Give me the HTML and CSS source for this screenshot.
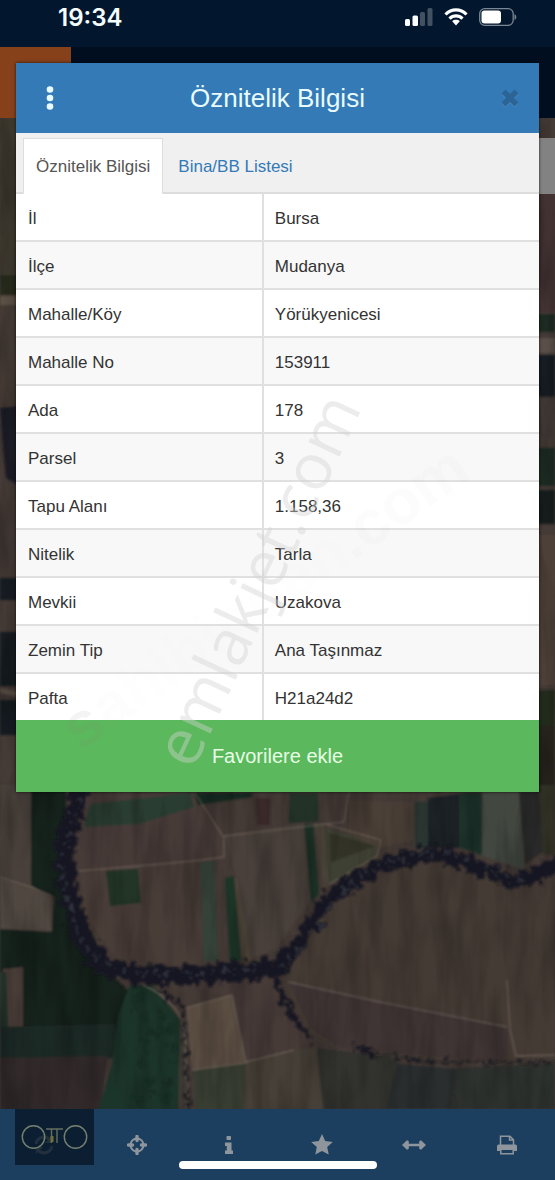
FILE: index.html
```html
<!DOCTYPE html>
<html lang="tr">
<head>
    <meta charset="UTF-8">
    <meta name="viewport" content="width=device-width, initial-scale=1.0">
    <title>Öznitelik Bilgisi</title>
    <link rel="stylesheet" href="styles.css">
</head>
<body>
    <div class="app">
        <div class="status-bar">
            <span class="time">19:34</span>
            <div class="status-icons">
                <svg width="28" height="18" viewBox="0 0 28 18" fill="#fff">
                    <rect x="0" y="11" width="5" height="7" rx="1.5"/>
                    <rect x="7.500" y="7.500" width="5.500" height="10.500" rx="1.5"/>
                    <rect x="15" y="4" width="5" height="14" rx="1.5" opacity=".25"/>
                    <rect x="22.500" y="0" width="5" height="18" rx="1.5" opacity=".25"/>
                </svg>
                <svg width="24" height="18" viewBox="0 0 24 18">
                    <g fill="none" stroke="#fff" stroke-width="3.200">
                        <path d="M1.500 6.500C7.500 .400 16.500 .400 22.500 6.500"/>
                        <path d="M5.500 10.700C9.200 7 14.800 7 18.500 10.700"/>
                    </g>
                    <path d="M8.200 13.200C10.200 11.300 13.800 11.300 15.800 13.200L12 17.500Z" fill="#fff"/>
                </svg>
                <svg width="38" height="18" viewBox="0 0 38 18">
                    <rect x=".700" y=".700" width="33.500" height="16.600" rx="5" fill="none" stroke="#7b8794" stroke-width="1.300"/>
                    <rect x="2.500" y="2.500" width="19.500" height="13" rx="3" fill="#fff"/>
                    <path d="M35.500 6.200c2.400.800 2.400 4.800 0 5.600z" fill="#7b8794"/>
                </svg>
            </div>
        </div>

        <main class="main">
            <svg class="map" viewBox="0 47 555 1062" preserveAspectRatio="xMidYMax slice" aria-hidden="true">
                <defs>
                    <filter id="trees" x="-10%" y="-10%" width="120%" height="120%">
                        <feTurbulence type="fractalNoise" baseFrequency=".13" numOctaves="2" seed="4" result="n"/>
                        <feDisplacementMap in="SourceGraphic" in2="n" scale="20" xChannelSelector="R" yChannelSelector="G"/>
                        <feGaussianBlur stdDeviation="1"/>
                    </filter>
                    <filter id="soft">
                        <feGaussianBlur stdDeviation=".8"/>
                    </filter>
                    <filter id="grain" x="0" y="0" width="100%" height="100%">
                        <feTurbulence type="fractalNoise" baseFrequency=".06 .012" numOctaves="3" seed="9"/>
                        <feColorMatrix values="0 0 0 0 0  0 0 0 0 0  0 0 0 0 0  0 1.600 0 0 -.600"/>
                    </filter>
                </defs>
                <rect y="47" width="555" height="1062" fill="#443a36"/>
                <g filter="url(#soft)">
                    <!-- left edge -->
                    <path fill="#3d372f" d="M0 118h20v162H0z"/>
                    <path fill="#26291f" d="M0 275h20v20H0z"/>
                    <path fill="#5c5145" d="M0 296h20v9H0z"/>
                    <path fill="#453b36" d="M0 305h20v100H0z"/>
                    <path fill="#1a1c28" d="M0 408l20-2v80L6 478z"/>
                    <path fill="#171b21" d="M0 578h20v22H0zM0 632h20v54H0zM0 700h20v35H0z"/>
                    <path fill="#5e5249" d="M0 688l20 4v5L0 693z"/>
                    <!-- right edge -->
                    <path fill="#423331" d="M535 194h20v118h-20z"/>
                    <path fill="#1d2b20" d="M535 314h20v18h-20z"/>
                    <path fill="#5a5048" d="M535 338h20v15h-20z"/>
                    <path fill="#141c20" d="M535 355h20v42h-20z"/>
                    <path fill="#403934" d="M535 397h20v40h-20z"/>
                    <path fill="#1f2c23" d="M535 448h20v38h-20z"/>
                    <path fill="#171b1b" d="M535 490h20v34h-20z"/>
                    <path fill="#4d4038" d="M535 535h20v150h-20z"/>
                    <path fill="#20291f" d="M535 690h20v36h-20z"/>
                    <path fill="#26221f" d="M535 726h20v66h-20z"/>
                    <!-- west bank -->
                    <path fill="#4a413b" d="M0 785h31v100L0 878z"/>
                    <path fill="#15211f" d="M31 785h35v118l-16-8-19-8z"/>
                    <path fill="#504741" d="M0 878l32 8 18 12 2 33-52-2z"/>
                    <path fill="#17211f" d="M0 929l52 3 2-34 22 2 30 70 24 22-14 52H0z"/>
                    <path fill="#483d37" d="M3 969l20-2v60H8z"/>
                    <path fill="#20302a" d="M0 972l6 0 2 56H0z"/>
                    <path fill="#1f2a26" d="M0 1027l115-3 4 34H0z"/>
                    <path fill="#322b2b" d="M0 1058l108-2-8 55H0z"/>
                    <path fill="#1c3529" d="M130 985l22 0 28 35 6 40-6 50H98l14-45 6-50z"/>
                    <path fill="#3f3a35" d="M180 1020l7 0 3 90h-12z"/>
                    <!-- fields between the river arms -->
                    <path fill="#473b37" d="M80 792l115 5 29 38v26L78 870z"/>
                    <path fill="#2a3d32" d="M90 804l100-11 4 14-55 17-55 3z"/>
                    <path fill="#172c20" d="M194 793h58v4l-54 8z"/>
                    <path fill="#483d39" d="M80 872l122-12v105l-78 3-40-54z"/>
                    <path fill="#203627" d="M106 871l32-2 3 34-31 3z"/>
                    <path fill="#344238" d="M200 862l14-1 4 100h-14z"/>
                    <path fill="#1f3527" d="M225 878l9-2 7 85-11 2z"/>
                    <path fill="#50463a" d="M235 878l6 0 10 82-8 1z"/>
                    <path fill="#4a3f3b" d="M226 836l79-14 5 80-35 48-23 8-16-82z"/>
                    <path fill="#3b2c2b" d="M255 798h15v27h-13z"/>
                    <path fill="#233127" d="M290 793h28v29l-29 1z"/>
                    <path fill="#1f3328" d="M304 824h9l6 70-8 9z"/>
                    <path fill="#4c443b" d="M315 823h9l5 60-5 8z"/>
                    <path fill="#3c3f33" d="M325 828l54 14-4 16-45 26z"/>
                    <path fill="#303027" d="M329 833l46 13-44 16z"/>
                    <path fill="#4b3f38" d="M349 800l64 2v38l-32 8-32-13z"/>
                    <path fill="#2c3630" d="M415 802h13v46h-13z"/>
                    <path fill="#1e2426" d="M428 798l31-4v54h-31z"/>
                    <path fill="#1b332b" d="M459 793h23v62l-23-8z"/>
                    <path fill="#42463f" d="M483 792h36l6 78-43-14z"/>
                    <path fill="#2b2b29" d="M519 792h20l4 60-18 12z"/>
                    <path fill="#333028" d="M539 785h16v70l-12-1z"/>
                    <!-- big fields on the south bank -->
                    <path fill="#443a36" d="M280 966l55-60 66-42 50-2 50 22 54 4v168l-75 6-168-19-30-30z"/>
                    <path fill="#403535" d="M288 982l220 45-2 35-165-14-30-20z"/>
                    <path fill="#463b39" d="M178 982l98-6 38 66-70 28-14-72z"/>
                    <path fill="#5a4e42" d="M186 1008l46-13 14 68-54 7z"/>
                    <path fill="#393d33" d="M193 1070l54-7-3 46h-49z"/>
                    <path fill="#463f39" d="M246 1062l48-13 23-1 8 61h-80z"/>
                    <path fill="#30332e" d="M317 1048l80 10-8 51h-66z"/>
                    <path fill="#292e2f" d="M397 1064l60 5-5 40h-65z"/>
                    <path fill="#2f302e" d="M457 1068l98-5v46H453z"/>
                </g>
                <g fill="none" stroke="#7a6e63" stroke-width="1.300" opacity=".65" filter="url(#soft)">
                    <path d="M78 871l72-6 52-5 22-3v-19l-29-45M224 836l120-14 5-30M0 877l34 11 18 8"/>
                    <path d="M288 982l92 20 127 25M507 980l3 50 6 26 39-1M186 1008l46-13 14 68-54 7M246 1062l48-12"/>
                    <path d="M143 985c22 9 40 28 42 46l2 78" stroke-width="2"/>
                    <path d="M325 824l56 16-4 16-48 28"/>
                </g>
                <rect y="47" width="555" height="1062" filter="url(#grain)" opacity=".28"/>
                <g fill="none" stroke="#171820" filter="url(#trees)">
                    <path stroke-width="19" d="M80 788c-8 35-22 60-11 100 9 36 10 60 38 78 36 16 95 8 165 3"/>
                    <path stroke-width="15" d="M268 973c20-9 38-40 52-62 18-27 50-45 100-56 36-7 55 18 95 26 20 1 30-16 50-19"/>
                    <path stroke-width="5" d="M276 980l16 34 20 26M350 1048l23 4"/>
                    <path stroke-width="4" d="M160 990l24 18"/>
                </g>
                <g fill="none" stroke="#1d1f20" filter="url(#trees)">
                    <path stroke-width="3" d="M375 1054l50 8 130 1M184 1008l5 101"/>
                </g>
                <g fill="none" stroke="#2f313b" filter="url(#trees)" stroke-dasharray="4 7">
                    <path stroke-width="5" d="M78 800c-8 35-24 60-11 92 9 36 12 56 40 73 36 14 95 8 160 3"/>
                    <path stroke-width="5" d="M280 966c20-9 38-40 50-60 18-25 44-41 94-53 36-5 55 18 95 26"/>
                </g>
                <g fill="none" stroke="#142a20" filter="url(#trees)" stroke-dasharray="6 12" stroke-width="7">
                    <path d="M134 1000l20 30-15 30 20 30-30 18M160 1010l14 40-8 50"/>
                </g>
            </svg>
            <div class="navbar"><span class="navbar-logo"></span></div>
            <div class="map-control"></div>

            <section class="modal">
                <header class="modal-header">
                    <button class="icon-button" type="button" aria-label="Menü">
                        <svg width="8" height="26" viewBox="0 0 8 26" fill="#e9fbff">
                            <circle cx="4" cy="4.500" r="3.300"/>
                            <circle cx="4" cy="13" r="3.300"/>
                            <circle cx="4" cy="21.500" r="3.300"/>
                        </svg>
                    </button>
                    <h1>Öznitelik Bilgisi</h1>
                    <button class="icon-button" type="button" aria-label="Kapat">
                        <svg width="20" height="20" viewBox="0 0 20 20" fill="none" stroke-width="5.600">
                            <path stroke="#4d88bd" d="M3.500 4.500l13 13M16.500 4.500l-13 13"/>
                            <path stroke="#2c6496" d="M3.500 3.500l13 13M16.500 3.500l-13 13"/>
                        </svg>
                    </button>
                </header>
                <nav class="tabs">
                    <a class="tab active" href="#oznitelik">Öznitelik Bilgisi</a>
                    <a class="tab" href="#bina">Bina/BB Listesi</a>
                </nav>
                <table class="info" id="oznitelik">
                    <tbody>
                        <tr><th scope="row">İl</th><td>Bursa</td></tr>
                        <tr><th scope="row">İlçe</th><td>Mudanya</td></tr>
                        <tr><th scope="row">Mahalle/Köy</th><td>Yörükyenicesi</td></tr>
                        <tr><th scope="row">Mahalle No</th><td>153911</td></tr>
                        <tr><th scope="row">Ada</th><td>178</td></tr>
                        <tr><th scope="row">Parsel</th><td>3</td></tr>
                        <tr><th scope="row">Tapu Alanı</th><td>1.158,36</td></tr>
                        <tr><th scope="row">Nitelik</th><td>Tarla</td></tr>
                        <tr><th scope="row">Mevkii</th><td>Uzakova</td></tr>
                        <tr><th scope="row">Zemin Tip</th><td>Ana Taşınmaz</td></tr>
                        <tr><th scope="row">Pafta</th><td>H21a24d2</td></tr>
                    </tbody>
                </table>
                <button class="favorite-button" type="button">Favorilere ekle</button>
                <svg class="watermark" viewBox="16 63 523 729" aria-hidden="true">
                    <text class="mark-back" transform="translate(80 752) rotate(-35)"><tspan fill-opacity=".09">s</tspan><tspan fill-opacity=".02">a</tspan><tspan fill-opacity=".01">hibinden</tspan><tspan fill-opacity=".025">.com</tspan></text>
                    <text class="mark-front" transform="translate(193 771) rotate(-65)">emlakjet.com</text>
                </svg>
            </section>
        </main>

        <footer class="toolbar">
            <button type="button" aria-label="Yenile">
                <svg width="22" height="22" viewBox="0 0 22 22" fill="none" stroke="#b0b4a8" stroke-width="3">
                    <path d="M3 10a8 8 0 0 1 14-4M19 12a8 8 0 0 1-14 4"/>
                    <path d="M19 2v7h-7zM3 20v-7h7z" fill="#b0b4a8" stroke="none"/>
                </svg>
            </button>
            <button type="button" aria-label="Konum">
                <svg width="20" height="20" viewBox="0 0 20 20" fill="none" stroke="#8f959c">
                    <circle cx="10" cy="10" r="6.500" stroke-width="2"/>
                    <path d="M10 1.500v4M10 14.500v4M1.500 10h4M14.500 10h4" stroke-width="3.400" stroke-linecap="round"/>
                </svg>
            </button>
            <button type="button" aria-label="Bilgi">
                <svg width="10" height="20" viewBox="0 0 10 20" fill="#8f959c">
                    <rect x="2.500" y="1" width="4.500" height="4" rx=".8"/>
                    <path d="M1 7.500h6.500v8H9V19H1v-3.500h1.800V11H1z"/>
                </svg>
            </button>
            <button type="button" aria-label="Favoriler">
                <svg width="22" height="21" viewBox="0 0 22 21" fill="#8f959c">
                    <path d="M11 0l3.200 7 7.600.900-5.600 5.200 1.500 7.500L11 16.900l-6.700 3.700 1.500-7.500L.200 7.900l7.600-.900z"/>
                </svg>
            </button>
            <button type="button" aria-label="Ölçüm">
                <svg width="24" height="12" viewBox="0 0 24 12" fill="#8f959c">
                    <path d="M0 6l5-4.800 1.800 1v2.500h10.400V2.200l1.800-1L24 6l-5 4.800-1.800-1V7.300H6.800v2.500l-1.800 1z"/>
                </svg>
            </button>
            <button type="button" aria-label="Yazdır">
                <svg width="22" height="20" viewBox="0 0 22 20" fill="none" stroke="#8f959c" stroke-width="1.500">
                    <path d="M4.500 10V1.200h9.500l3.500 3.500V10M13.500 1.200V5h4"/>
                    <path d="M1 16v-4.500c0-1.500 1-2 2-2h16c1 0 2 .5 2 2V16h-3v-2H4v2z" fill="#8f959c" stroke="none"/>
                    <path d="M4.800 14.200v4.600h12.400v-4.600z" fill="#1c3f60"/>
                </svg>
            </button>
            <div class="brand">
                <svg width="68" height="26" viewBox="0 0 68 26" fill="none" stroke="#74806f" stroke-width="1.400">
                    <circle cx="12.500" cy="13" r="11.200"/>
                    <circle cx="54.500" cy="13" r="11.200"/>
                    <path d="M25 5h9M30.500 5v14M33 5h9M36 5v14" stroke="#65705e"/>
                    <path d="M31 12v6" stroke="#6f7238" stroke-width="3"/>
                </svg>
            </div>
            <div class="home-indicator"></div>
        </footer>
    </div>
</body>
</html>
```
FILE: styles.css
```css
* {
    box-sizing: border-box;
}

body {
    margin: 0;
    font-family: "Liberation Sans", Arial, sans-serif;
    font-size: 17px;
    color: #333;
    background-color: #02172d;
}

button {
    border: none;
    padding: 0;
    background: none;
    font-family: inherit;
    cursor: pointer;
}

svg {
    display: block;
}

.app {
    display: flex;
    flex-direction: column;
    min-height: 100vh;
}

/* status bar */
.status-bar {
    display: flex;
    justify-content: space-between;
    height: 47px;
    padding: 4px 38px 0 58px;
    background-color: #02172d;
}

.time {
    font-family: Inter, sans-serif;
    font-size: 24px;
    font-weight: 600;
    line-height: 28px;
    color: #f4fdff;
}

.status-icons {
    display: flex;
    gap: 11px;
    padding-top: 4px;
}

/* map and the parts dimmed behind the dialog */
.main {
    position: relative;
    flex: 1;
    padding: 16px;
    overflow: hidden;
}

.map {
    position: absolute;
    top: 0;
    left: 0;
    width: 100%;
    height: 100%;
}

.navbar {
    position: absolute;
    top: 0;
    left: 0;
    right: 0;
    height: 71px;
    background-color: #010e20;
}

.navbar-logo {
    display: block;
    width: 71px;
    height: 71px;
    background-color: #86411b;
}

.map-control {
    position: absolute;
    top: 91px;
    right: 0;
    width: 40px;
    height: 56px;
    background-color: #828282;
}

/* dialog */
.modal {
    position: relative;
    background-color: #fff;
    box-shadow: 0 0 3px rgba(0, 0, 0, 0.7);
}

.modal-header {
    display: grid;
    grid-template-columns: 68px 1fr 58px;
    height: 70px;
    background-color: #337ab7;
}

.modal-header h1 {
    margin: 0;
    padding-right: 10px;
    font-size: 26px;
    font-weight: normal;
    line-height: 70px;
    text-align: center;
    color: #e9fbff;
}

.icon-button {
    display: flex;
    align-items: center;
    justify-content: center;
}

.tabs {
    display: flex;
    gap: 2px;
    height: 61px;
    padding: 5px 7px 0;
    background-color: #f0f0f0;
    border-bottom: 2px solid #ddd;
}

.tab {
    height: 56px;
    padding: 0 12px;
    border: 1px solid transparent;
    line-height: 56px;
    text-decoration: none;
    color: #337ab7;
}

.tab.active {
    color: #555;
    background-color: #fff;
    border-color: #ddd;
    border-bottom-color: #fff;
}

.info {
    width: 100%;
    border-spacing: 0;
    table-layout: fixed;
}

.info th,
.info td {
    height: 48px;
    padding: 3px 12px 0;
    border-bottom: 2px solid #e0e0e0;
    font-weight: normal;
    text-align: left;
}

.info th {
    width: 47%;
}

.info td {
    border-left: 2px solid #e0e0e0;
    padding-left: 11px;
}

.info tr:nth-child(even) {
    background-color: #f8f8f8;
}

.info tr:last-child th,
.info tr:last-child td {
    height: 46px;
    border-bottom: none;
}

.favorite-button {
    display: block;
    width: 100%;
    height: 72px;
    font-size: 20px;
    color: #e6ffe6;
    background-color: #5cb85c;
}

.watermark {
    position: absolute;
    top: 0;
    left: 0;
    width: 100%;
    height: 100%;
    pointer-events: none;
}

.mark-front {
    font-family: "Open Sans", sans-serif;
    font-size: 64px;
    fill: rgba(210, 210, 210, 0.42);
}

.mark-back {
    font-size: 63px;
    font-weight: bold;
    fill: #808080;
}

/* bottom toolbar */
.toolbar {
    position: relative;
    display: grid;
    grid-template-columns: repeat(6, 1fr);
    height: 71px;
    background-color: #1c3f60;
}

.toolbar button {
    display: flex;
    align-items: center;
    justify-content: center;
    padding-right: 4px;
}

.brand {
    position: absolute;
    top: 0;
    left: 15px;
    display: flex;
    align-items: center;
    justify-content: center;
    width: 79px;
    height: 56px;
    background-color: rgba(9, 25, 42, 0.85);
}

.home-indicator {
    position: absolute;
    bottom: 11px;
    left: 50%;
    width: 198px;
    height: 8px;
    border-radius: 4px;
    background-color: #fff;
    transform: translateX(-50%);
}
```
